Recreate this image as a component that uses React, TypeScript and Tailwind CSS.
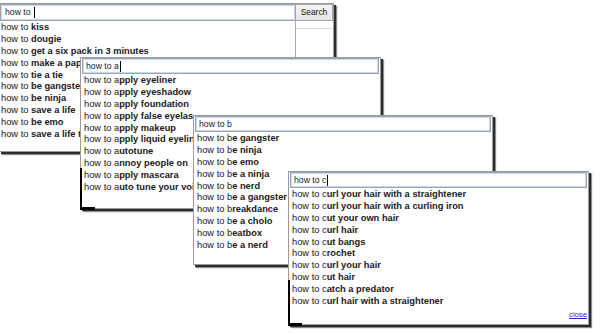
import type { ReactNode } from "react";

type SuggestWindowProps = {
  className: string;
  typed: string;
  items: string[];
  cursor?: boolean;
  close?: boolean;
  corner?: ReactNode;
};

const font = "font-['Liberation_Sans',Arial,sans-serif]";

function Suggestion({ typed, text }: { typed: string; text: string }) {
  return (
    <div className="h-[11.9px] overflow-hidden whitespace-nowrap text-[9.3px] leading-[11.9px] text-[#1a1a1a]">
      <span className="whitespace-pre">{typed}</span>
      <span className="font-bold">{text.slice(typed.length)}</span>
    </div>
  );
}

function QueryBox({ typed, cursor, className }: { typed: string; cursor?: boolean; className: string }) {
  return (
    <div
      className={`flex items-center border border-[#9aa4b4] px-[3px] shadow-[inset_0_0_0_1px_#c9d8ec] ${className}`}
    >
      <span className="whitespace-pre text-[8.7px] leading-none text-[#222]">{typed}</span>
      {cursor ? <span className="ml-px inline-block h-[11px] w-px bg-black" /> : null}
    </div>
  );
}

// the dropdowns are stacked like screenshots, so rows that sit under the next
// window only carry the part that is still visible
function SuggestWindow({ className, typed, items, cursor, close, corner }: SuggestWindowProps) {
  return (
    <div
      className={`absolute flex flex-col border border-[#9c9c9c] bg-white shadow-[2px_2px_0_#2e2e2e,3px_3px_1px_#8a8a8a] ${className}`}
    >
      <QueryBox typed={typed} cursor={cursor} className="mx-px h-[16px]" />
      <div className="pl-[3px] pt-[1px]">
        {items.map((item) => (
          <Suggestion key={item} typed={typed} text={item} />
        ))}
      </div>
      {close ? (
        <div className="mt-auto flex justify-end pb-[5px] pr-[1px]">
          <span className="text-[7.7px] leading-none text-[#2a2ad0] underline">close</span>
        </div>
      ) : null}
      {corner}
    </div>
  );
}

function FirstWindow() {
  const typed = "how to ";
  const items = [
    "how to kiss",
    "how to dougie",
    "how to get a six pack in 3 minutes",
    "how to make a pap",
    "how to tie a tie",
    "how to be gangste",
    "how to be ninja",
    "how to save a life",
    "how to be emo",
    "how to save a life t",
  ];

  return (
    <div className="absolute left-[-1px] top-[3px] flex h-[149px] w-[335px] flex-col border border-[#9c9c9c] bg-white shadow-[2px_2px_0_#2e2e2e,3px_3px_1px_#8a8a8a]">
      <div className="flex h-[17px]">
        <QueryBox typed={typed} cursor className="h-full w-[296px] pl-[4px]" />
        <div className="flex flex-1 items-center justify-center border border-l-0 border-[#a8a8a8] bg-[linear-gradient(#f6f6f6,#e4e4e4)] text-[8.4px] leading-none text-[#111]">
          Search
        </div>
      </div>
      <div className="flex flex-1">
        <div className="w-[296px] border-r border-[#a8a8a8] pl-px pt-[1px]">
          {items.map((item) => (
            <Suggestion key={item} typed={typed} text={item} />
          ))}
        </div>
        <div className="flex-1">
          <div className="h-[8px] border-b border-[#dcdcdc]" />
        </div>
      </div>
    </div>
  );
}

export default function App() {
  return (
    <div className={`relative h-[334px] w-[600px] overflow-hidden bg-white ${font}`}>
      <FirstWindow />

      <SuggestWindow
        className="left-[80px] top-[57px] h-[152px] w-[301px]"
        typed="how to a"
        cursor
        items={[
          "how to apply eyeliner",
          "how to apply eyeshadow",
          "how to apply foundation",
          "how to apply false eyelas",
          "how to apply makeup",
          "how to apply liquid eyelin",
          "how to autotune",
          "how to annoy people on",
          "how to apply mascara",
          "how to auto tune your voi",
        ]}
        corner={
          <>
            <span className="absolute bottom-[-2px] left-[-1px] h-[42px] w-[2px] bg-black" />
            <span className="absolute bottom-[-2px] left-[-1px] h-[3px] w-[15px] bg-black" />
          </>
        }
      />

      <SuggestWindow
        className="left-[193px] top-[115px] h-[150px] w-[300px]"
        typed="how to b"
        items={[
          "how to be gangster",
          "how to be ninja",
          "how to be emo",
          "how to be a ninja",
          "how to be nerd",
          "how to be a gangster",
          "how to breakdance",
          "how to be a cholo",
          "how to beatbox",
          "how to be a nerd",
        ]}
      />

      <SuggestWindow
        className="left-[288px] top-[171px] h-[154px] w-[301px]"
        typed="how to c"
        cursor
        close
        items={[
          "how to curl your hair with a straightener",
          "how to curl your hair with a curling iron",
          "how to cut your own hair",
          "how to curl hair",
          "how to cut bangs",
          "how to crochet",
          "how to curl your hair",
          "how to cut hair",
          "how to catch a predator",
          "how to curl hair with a straightener",
        ]}
        corner={
          <>
            <span className="absolute bottom-[-2px] left-[-1px] h-[46px] w-[2px] bg-black" />
            <span className="absolute bottom-[-2px] left-[-1px] h-[3px] w-[14px] bg-black" />
          </>
        }
      />
    </div>
  );
}
